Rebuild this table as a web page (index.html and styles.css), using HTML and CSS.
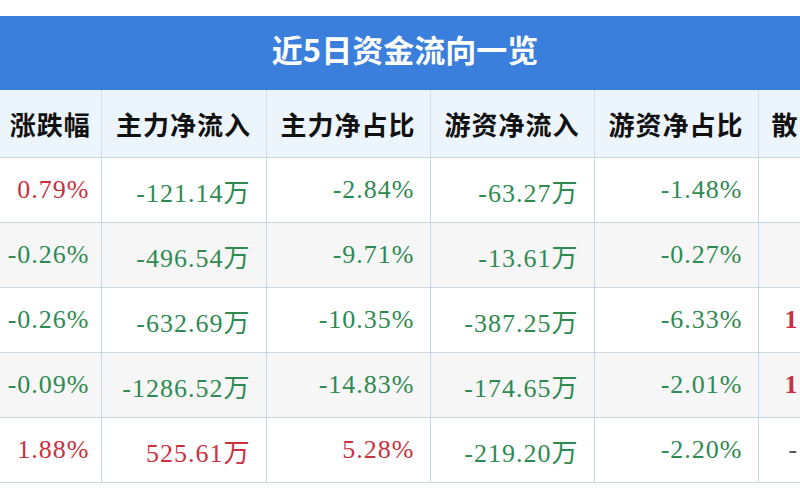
FILE: index.html
```html
<!DOCTYPE html>
<html lang="zh">
<head>
<meta charset="utf-8">
<title>近5日资金流向一览</title>
<link rel="stylesheet" href="styles.css">
</head>
<body>
<div class="page">
  <div class="title">近5日资金流向一览</div>
  <table class="flow">
    <colgroup>
      <col class="c1"><col class="c2"><col class="c3"><col class="c4"><col class="c5"><col class="c6">
    </colgroup>
    <thead>
      <tr>
        <th>涨跌幅</th><th>主力净流入</th><th>主力净占比</th><th>游资净流入</th><th>游资净占比</th><th class="last">散</th>
      </tr>
    </thead>
    <tbody>
      <tr>
        <td class="up">0.79%</td><td class="down">-121.14万</td><td class="down">-2.84%</td><td class="down">-63.27万</td><td class="down">-1.48%</td><td class="last"></td>
      </tr>
      <tr class="alt">
        <td class="down">-0.26%</td><td class="down">-496.54万</td><td class="down">-9.71%</td><td class="down">-13.61万</td><td class="down">-0.27%</td><td class="last"></td>
      </tr>
      <tr>
        <td class="down">-0.26%</td><td class="down">-632.69万</td><td class="down">-10.35%</td><td class="down">-387.25万</td><td class="down">-6.33%</td><td class="last up">1</td>
      </tr>
      <tr class="alt">
        <td class="down">-0.09%</td><td class="down">-1286.52万</td><td class="down">-14.83%</td><td class="down">-174.65万</td><td class="down">-2.01%</td><td class="last up">1</td>
      </tr>
      <tr>
        <td class="up">1.88%</td><td class="up">525.61万</td><td class="up">5.28%</td><td class="down">-219.20万</td><td class="down">-2.20%</td><td class="last dash">-</td>
      </tr>
    </tbody>
  </table>
</div>
</body>
</html>
```
FILE: styles.css
```css
html, body {
  margin: 0;
  padding: 0;
  background: #ffffff;
}
.page {
  width: 800px;
  height: 500px;
  overflow: hidden;
  padding-top: 16px;
  box-sizing: border-box;
}
.title {
  height: 74px;
  background: #3a7fdc;
  color: #ffffff;
  font-family: "Noto Sans CJK SC", "Noto Sans", sans-serif;
  font-weight: 700;
  font-size: 31px;
  line-height: 66px;
  text-align: center;
  padding-left: 10px;
}
.flow {
  border-collapse: collapse;
  table-layout: fixed;
  width: 800px;
}
.c1 { width: 101px; }
.c2 { width: 165px; }
.c3 { width: 164px; }
.c4 { width: 164px; }
.c5 { width: 164px; }
.c6 { width: 42px; }
.flow th {
  height: 67px;
  padding: 0;
  background: #ecf4fc;
  color: #111111;
  font-family: "Noto Sans CJK SC", sans-serif;
  font-weight: 700;
  font-size: 26px;
  letter-spacing: 1px;
  text-align: center;
  border-left: 1px solid #d3dde8;
  border-bottom: 1px solid #c9d6e4;
  white-space: nowrap;
}
.flow th:first-child {
  border-left: none;
}
.flow th.last {
  text-align: left;
  padding-left: 13px;
}
.flow td {
  height: 64px;
  padding: 0 15px 0 0;
  font-family: "Liberation Serif", "Noto Sans CJK SC", serif;
  font-size: 26px;
  letter-spacing: 1px;
  text-align: right;
  border-left: 1px solid #c9d6e4;
  border-bottom: 1px solid #c9d6e4;
  white-space: nowrap;
  background: #ffffff;
}
.flow td:first-child {
  border-left: none;
  padding-right: 11px;
}
.flow td.last {
  text-align: left;
  padding: 0 0 0 26px;
  font-weight: 700;
  letter-spacing: 0;
}
.flow td.dash {
  color: #555555;
  font-weight: 400;
  padding-left: 30px;
}
.flow tr.alt td {
  background: #f6f6f6;
}
.up { color: #c8323e; }
.down { color: #2f8a52; }
```
